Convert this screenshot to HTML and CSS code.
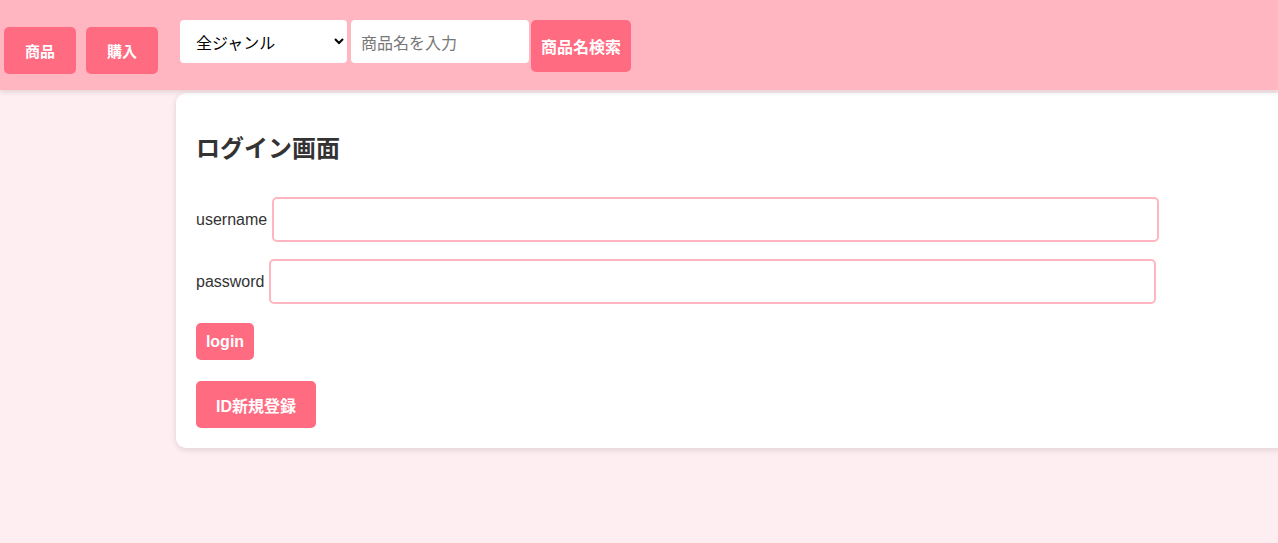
FILE: index.html
```html
<!DOCTYPE html>
<html lang="ja">
<head>
<meta charset="utf-8">
<title>ログイン画面</title>
<link rel="stylesheet" href="styles.css">
</head>
<body>
<header class="topbar">
  <nav class="nav">
    <button class="btn nav-btn">商品</button>
    <button class="btn nav-btn">購入</button>
  </nav>
  <form class="search">
    <select class="genre">
      <option>全ジャンル</option>
    </select>
    <input class="keyword" type="text" placeholder="商品名を入力">
    <button class="btn search-btn" type="button">商品名検索</button>
  </form>
</header>
<main class="card">
  <h2 class="title">ログイン画面</h2>
  <div class="row">
    <label class="label">username</label>
    <input class="field" type="text">
  </div>
  <div class="row">
    <label class="label">password</label>
    <input class="field" type="password">
  </div>
  <div class="actions">
    <button class="btn login-btn">login</button>
    <button class="btn reg-btn">ID新規登録</button>
  </div>
</main>
</body>
</html>
```

FILE: styles.css
```css
html, body {
  margin: 0;
  padding: 0;
  overflow: hidden;
}
body {
  background: #ffeef1;
  font-family: "Liberation Sans", Arial, "Noto Sans CJK JP", sans-serif;
  color: #333;
  height: 543px;
}
.topbar {
  background: #ffb6c1;
  height: 90px;
  box-sizing: border-box;
  padding: 20px 4px 0;
  display: flex;
  align-items: flex-start;
  box-shadow: 0 2px 5px rgba(0, 0, 0, 0.12);
  position: relative;
  z-index: 1;
}
.nav {
  display: flex;
  gap: 10px;
  margin-top: 7px;
}
.btn {
  background: #ff6b81;
  color: #fff;
  border: none;
  border-radius: 5px;
  font-family: "Liberation Sans", Arial, "Noto Sans CJK JP", sans-serif;
  font-weight: bold;
  cursor: pointer;
  box-sizing: border-box;
}
.nav-btn {
  width: 72px;
  height: 47px;
  font-size: 15px;
  padding: 0;
}
.search {
  display: flex;
  align-items: flex-start;
  margin: 0 0 0 22px;
}
.genre {
  width: 167px;
  height: 43px;
  border: none;
  border-radius: 4px;
  background: #fff;
  font-size: 16px;
  padding: 0 6px 0 12px;
  font-family: "Noto Sans CJK JP", sans-serif;
  color: #000;
}
.keyword {
  width: 178px;
  height: 43px;
  box-sizing: border-box;
  border: none;
  border-radius: 4px;
  background: #fff;
  margin-left: 4px;
  padding: 0 10px;
  font-size: 16px;
  font-family: "Noto Sans CJK JP", sans-serif;
}
.keyword::placeholder {
  color: #777;
}
.search-btn {
  margin-left: 2px;
  width: 100px;
  height: 52px;
  font-size: 16px;
  padding: 0;
}
.card {
  display: block;
  background: #fff;
  margin: 3px -40px 0 176px;
  padding: 20px 20px 20px;
  border-radius: 10px;
  box-shadow: 0 2px 6px rgba(0, 0, 0, 0.12);
}
.title {
  font-size: 24px;
  font-weight: bold;
  margin: 21px 0 33px;
  line-height: 30px;
  font-family: "Liberation Sans", Arial, "Noto Sans CJK JP", sans-serif;
  color: #333;
}
.row {
  display: flex;
  align-items: center;
  margin-bottom: 17px;
}
.label {
  font-size: 16px;
  color: #333;
}
.field {
  width: 887px;
  height: 45px;
  box-sizing: border-box;
  border: 2px solid #ffb6c1;
  border-radius: 5px;
  margin-left: 5px;
  outline: none;
}
.actions {
  display: flex;
  flex-direction: column;
  align-items: flex-start;
  gap: 21px;
  margin-top: 19px;
}
.login-btn {
  width: 58px;
  height: 37px;
  font-size: 16px;
  padding: 0;
}
.reg-btn {
  width: 120px;
  height: 47px;
  font-size: 16px;
  padding: 0;
}
```
